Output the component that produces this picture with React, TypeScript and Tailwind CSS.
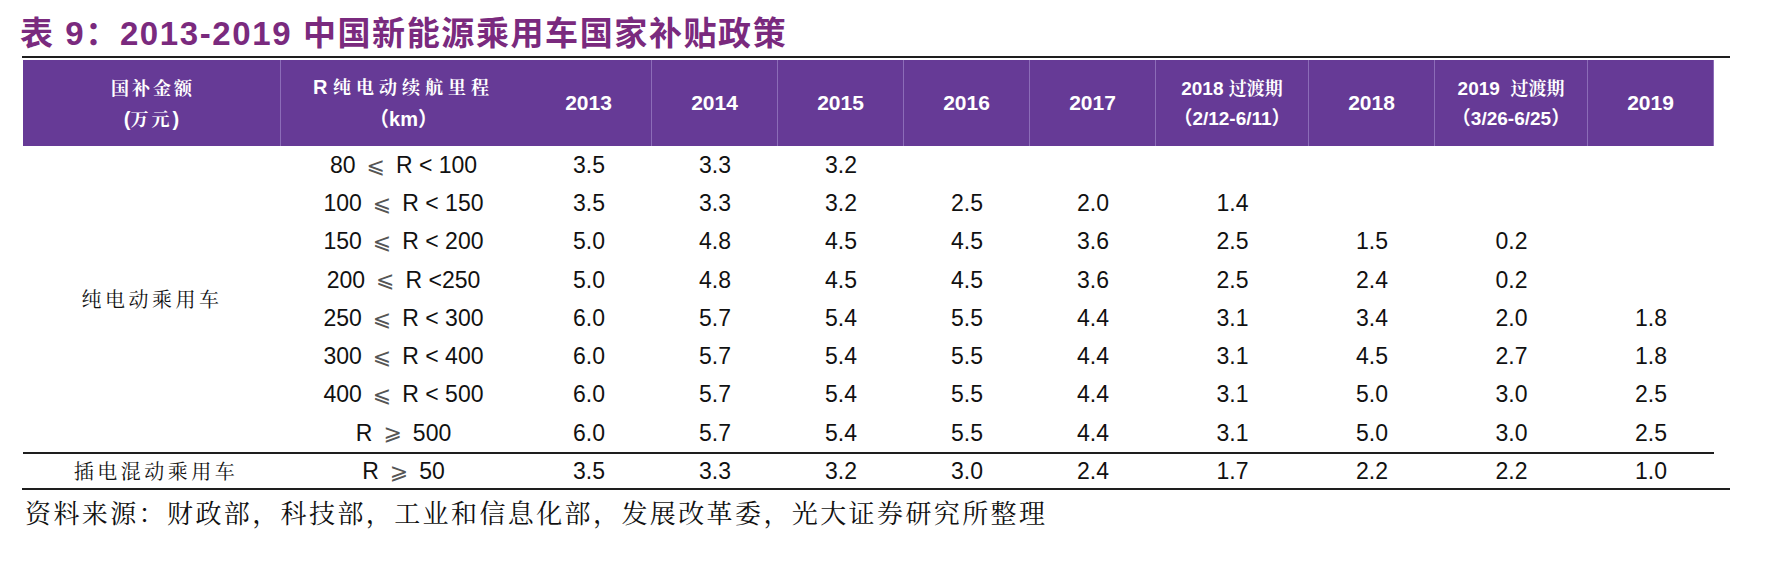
import React from "react"

const cols = "grid-cols-[258px_245px_126px_126px_126px_126px_126px_153px_126px_153px_126px]"

const evRows = [
  { a: "80", op: "⩽", b: "R < 100", v: ["3.5", "3.3", "3.2", "", "", "", "", "", ""] },
  { a: "100", op: "⩽", b: "R < 150", v: ["3.5", "3.3", "3.2", "2.5", "2.0", "1.4", "", "", ""] },
  { a: "150", op: "⩽", b: "R < 200", v: ["5.0", "4.8", "4.5", "4.5", "3.6", "2.5", "1.5", "0.2", ""] },
  { a: "200", op: "⩽", b: "R <250", v: ["5.0", "4.8", "4.5", "4.5", "3.6", "2.5", "2.4", "0.2", ""] },
  { a: "250", op: "⩽", b: "R < 300", v: ["6.0", "5.7", "5.4", "5.5", "4.4", "3.1", "3.4", "2.0", "1.8"] },
  { a: "300", op: "⩽", b: "R < 400", v: ["6.0", "5.7", "5.4", "5.5", "4.4", "3.1", "4.5", "2.7", "1.8"] },
  { a: "400", op: "⩽", b: "R < 500", v: ["6.0", "5.7", "5.4", "5.5", "4.4", "3.1", "5.0", "3.0", "2.5"] },
  { a: "R", op: "⩾", b: "500", v: ["6.0", "5.7", "5.4", "5.5", "4.4", "3.1", "5.0", "3.0", "2.5"] },
]

const phev = { a: "R", op: "⩾", b: "50", v: ["3.5", "3.3", "3.2", "3.0", "2.4", "1.7", "2.2", "2.2", "1.0"] }

const sep = "border-r border-[#8c6cb8]"

const Range = ({ a, op, b }: { a: string; op: string; b: string }) => (
  <span className="flex items-center justify-center whitespace-pre">
    {a}
    <span className="mx-[11px] font-['DejaVu_Sans',sans-serif] text-[22px] text-[#555]">{op}</span>
    {b}
  </span>
)

export default function App() {
  return (
    <div className="w-[1768px] h-[562px] bg-white overflow-hidden font-['Liberation_Sans','Noto_Sans_CJK_SC',sans-serif]">
      <div className="pl-[20px] pt-[12px] h-[56px]">
        <h1 className="text-[33px] leading-[44px] font-bold tracking-[1.6px] text-[#7a2a7e] font-['Liberation_Sans','Noto_Sans_CJK_SC',sans-serif]">
          表 9：2013-2019 中国新能源乘用车国家补贴政策
        </h1>
      </div>

      <div className="ml-[22px] w-[1708px] border-t-2 border-b-2 border-[#1e1e1e]">
        {/* header */}
        <div className={`grid ${cols} ml-px w-[1691px] h-[86px] mt-[2px] bg-[#663a96] text-white font-bold`}>
          <div className={`${sep} flex flex-col items-center justify-center leading-[31px] text-[18px] font-['Noto_Serif_CJK_SC','Noto_Sans_CJK_SC',serif]`}>
            <span className="tracking-[3px] pl-[3px]">国补金额</span>
            <span>
              <span className="font-['Liberation_Sans',sans-serif] text-[20px]">(</span>
              <span className="tracking-[3px]">万元</span>
              <span className="font-['Liberation_Sans',sans-serif] text-[20px]">)</span>
            </span>
          </div>
          <div className="flex flex-col items-center justify-center leading-[31px] text-[18px]">
            <span>
              <span className="text-[20px]">R </span>
              <span className="tracking-[5px] font-['Noto_Serif_CJK_SC','Noto_Sans_CJK_SC',serif]">纯电动续航里程</span>
            </span>
            <span className="text-[20px]">（km）</span>
          </div>
          <div className={`${sep} flex items-center justify-center text-[21px]`}>2013</div>
          {["2014", "2015", "2016", "2017"].map((y) => (
            <div key={y} className={`${sep} flex items-center justify-center text-[21px]`}>
              {y}
            </div>
          ))}
          <div className={`${sep} flex flex-col items-center justify-center leading-[30px] text-[19px]`}>
            <span>
              2018 <span className="font-['Noto_Serif_CJK_SC','Noto_Sans_CJK_SC',serif] text-[18px]">过渡期</span>
            </span>
            <span>（2/12-6/11）</span>
          </div>
          <div className={`${sep} flex items-center justify-center text-[21px]`}>2018</div>
          <div className={`${sep} flex flex-col items-center justify-center leading-[30px] text-[19px]`}>
            <span className="whitespace-pre">
              2019  <span className="font-['Noto_Serif_CJK_SC','Noto_Sans_CJK_SC',serif] text-[18px]">过渡期</span>
            </span>
            <span>（3/26-6/25）</span>
          </div>
          <div className="flex items-center justify-center text-[21px] border-r border-[#8c6cb8]">2019</div>
        </div>

        {/* pure EV rows */}
        <div className={`grid ${cols} grid-rows-[repeat(8,1fr)] ml-px w-[1691px] h-[306px] text-[23px] text-[#111]`}>
          <div className="row-span-8 flex items-center justify-center text-[20px] tracking-[3.5px] font-['Noto_Serif_CJK_SC','Noto_Sans_CJK_SC',serif]">
            纯电动乘用车
          </div>
          {evRows.map((r, i) => (
            <React.Fragment key={i}>
              <div className="flex items-center justify-center">
                <Range a={r.a} op={r.op} b={r.b} />
              </div>
              {r.v.map((v, j) => (
                <div key={j} className="flex items-center justify-center">
                  {v}
                </div>
              ))}
            </React.Fragment>
          ))}
        </div>

        {/* PHEV row */}
        <div className={`grid ${cols} ml-px w-[1691px] h-[36px] border-t-2 border-[#1e1e1e] text-[23px] text-[#111]`}>
          <div className="flex items-center justify-center pl-[8px] text-[20px] tracking-[3.5px] font-['Noto_Serif_CJK_SC','Noto_Sans_CJK_SC',serif]">
            插电混动乘用车
          </div>
          <div className="flex items-center justify-center">
            <Range a={phev.a} op={phev.op} b={phev.b} />
          </div>
          {phev.v.map((v, j) => (
            <div key={j} className="flex items-center justify-center">
              {v}
            </div>
          ))}
        </div>
      </div>

      <p className="pl-[25px] text-[26px] leading-[44px] tracking-[2.4px] text-[#111] font-['Noto_Serif_CJK_SC','Noto_Sans_CJK_SC',serif]">
        资料来源：财政部，科技部，工业和信息化部，发展改革委，光大证券研究所整理
      </p>
    </div>
  )
}
